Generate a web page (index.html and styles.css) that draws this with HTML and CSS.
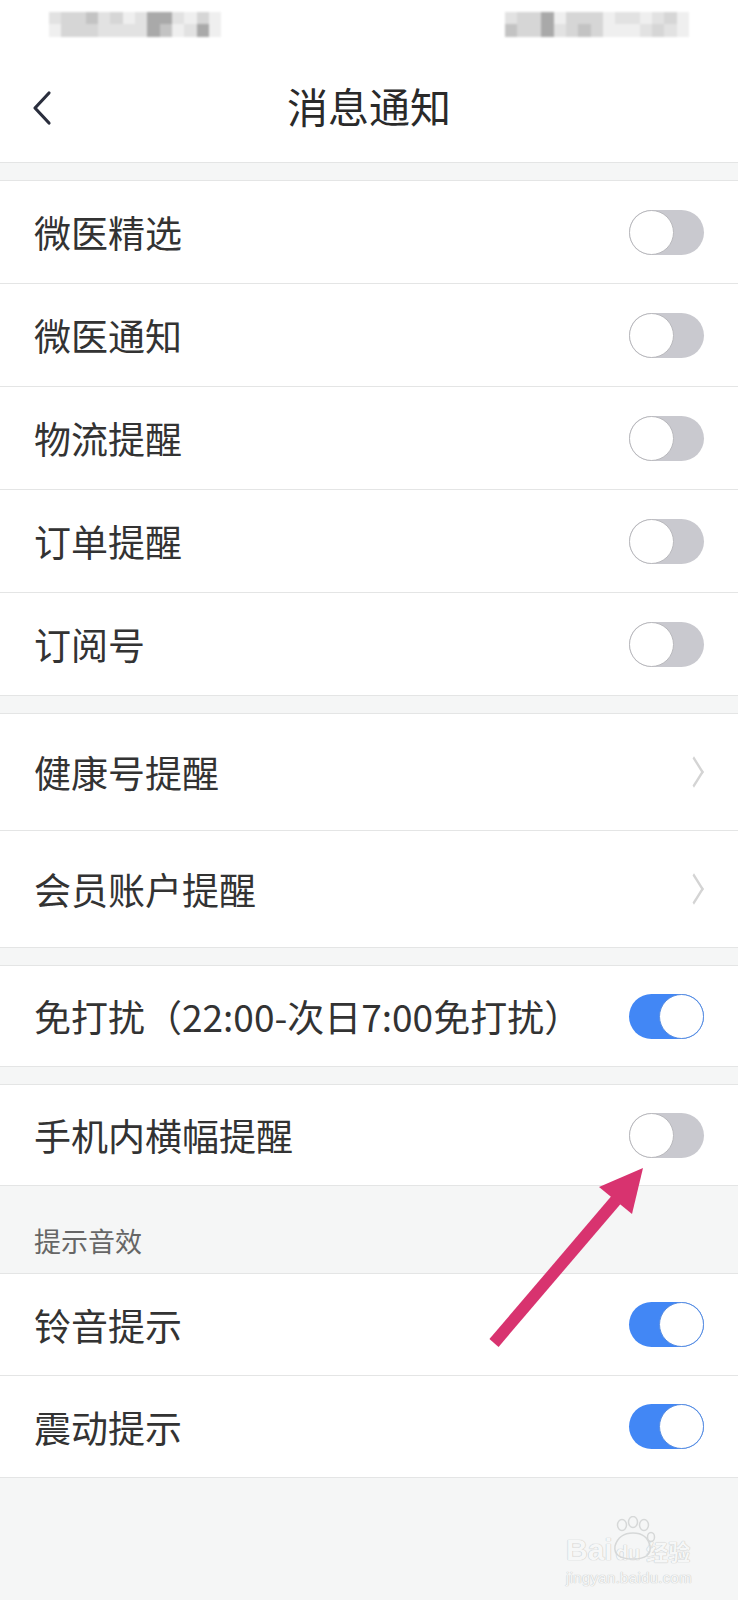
FILE: index.html
```html
<!DOCTYPE html>
<html lang="zh-CN">
<head>
    <meta charset="UTF-8">
    <meta name="viewport" content="width=device-width, initial-scale=1.0">
    <link rel="stylesheet" href="styles.css">
    <title>消息通知</title>
</head>
<body>
    <div class="page">
        <!-- barra de status (borrada) -->
        <div class="status">
            <div class="blur blur-left">
                <i class="s2"></i><i class="s3"></i><i class="s3"></i><i class="s4"></i><i class="s2"></i><i class="s3"></i><i class="s1"></i><i class="s2"></i><i class="s5"></i><i class="s5"></i><i class="s2"></i><i class="s1"></i><i class="s3"></i><i class="s1"></i>
                <i class="s1"></i><i class="s3"></i><i class="s3"></i><i class="s3"></i><i class="s2"></i><i class="s2"></i><i class="s2"></i><i class="s2"></i><i class="s5"></i><i class="s4"></i><i class="s1"></i><i class="s2"></i><i class="s5"></i><i class="s1"></i>
            </div>
            <div class="blur blur-right">
                <i class="s2"></i><i class="s3"></i><i class="s3"></i><i class="s5"></i><i class="s1"></i><i class="s3"></i><i class="s3"></i><i class="s3"></i><i class="s1"></i><i class="s2"></i><i class="s2"></i><i class="s1"></i><i class="s2"></i><i class="s3"></i><i class="s1"></i>
                <i class="s4"></i><i class="s3"></i><i class="s3"></i><i class="s5"></i><i class="s2"></i><i class="s3"></i><i class="s4"></i><i class="s3"></i><i class="s1"></i><i class="s1"></i><i class="s1"></i><i class="s2"></i><i class="s3"></i><i class="s2"></i><i class="s1"></i>
            </div>
        </div>

        <!-- cabecalho -->
        <header class="navbar">
            <svg class="back" width="22" height="36" viewBox="0 0 22 36">
                <path d="M18 3 L4 18 L18 33" fill="none" stroke="#2a2e3d" stroke-width="3.2" stroke-linecap="round" stroke-linejoin="round"/>
            </svg>
            <h1 class="title">消息通知</h1>
        </header>

        <div class="gap"></div>

        <section class="group">
            <div class="row"><span>微医精选</span><span class="switch"></span></div>
            <div class="row"><span>微医通知</span><span class="switch"></span></div>
            <div class="row"><span>物流提醒</span><span class="switch"></span></div>
            <div class="row"><span>订单提醒</span><span class="switch"></span></div>
            <div class="row"><span>订阅号</span><span class="switch"></span></div>
        </section>

        <div class="gap"></div>

        <section class="group">
            <div class="row row-link"><span>健康号提醒</span><span class="chevron"></span></div>
            <div class="row row-link"><span>会员账户提醒</span><span class="chevron"></span></div>
        </section>

        <div class="gap"></div>

        <section class="group group-single">
            <div class="row"><span>免打扰（22:00-次日7:00免打扰）</span><span class="switch on"></span></div>
        </section>

        <div class="gap"></div>

        <section class="group group-single">
            <div class="row"><span>手机内横幅提醒</span><span class="switch"></span></div>
        </section>

        <div class="section-title">提示音效</div>

        <section class="group group-sound">
            <div class="row"><span>铃音提示</span><span class="switch on"></span></div>
            <div class="row"><span>震动提示</span><span class="switch on"></span></div>
        </section>

        <!-- seta de destaque -->
        <svg class="arrow" width="738" height="1600" viewBox="0 0 738 1600">
            <line x1="494" y1="1343" x2="616" y2="1200" stroke="#d8336f" stroke-width="12"/>
            <polygon points="643,1168 599,1187 632,1214" fill="#d8336f"/>
        </svg>

        <!-- marca d'agua -->
        <div class="watermark">
            <svg class="paw" width="46" height="46" viewBox="0 0 46 46">
                <ellipse cx="12" cy="9" rx="4.5" ry="5.5" fill="none" stroke="#d6d8d8" stroke-width="1.5"/>
                <ellipse cx="23" cy="6" rx="4.5" ry="5.5" fill="none" stroke="#d6d8d8" stroke-width="1.5"/>
                <ellipse cx="34" cy="9" rx="4.5" ry="5.5" fill="none" stroke="#d6d8d8" stroke-width="1.5"/>
                <ellipse cx="41" cy="21" rx="3.5" ry="4.5" fill="none" stroke="#d6d8d8" stroke-width="1.5"/>
                <path d="M5 30 Q9 17 23 17 Q37 17 40 30 Q42 43 23 43 Q3 43 5 30 Z" fill="none" stroke="#d6d8d8" stroke-width="1.5"/>
            </svg>
            <div class="wm-main"><span>Bai</span><span class="wm-du">du</span><span class="wm-cn">经验</span></div>
            <div class="wm-url">jingyan.baidu.com</div>
        </div>
    </div>
</body>
</html>
```

FILE: styles.css
```css
:root {
    --texto: #333;
    --fundo: #f5f6f6;
    --linha: #e4e5e5;
    --azul: #4287f5;
    --cinza-switch: #c9c9cf;
}
body {
    margin: 0;
    background-color: var(--fundo);
    font-family: "Noto Sans CJK SC", "Noto Sans", sans-serif;
    color: var(--texto);
}
.page {
    position: relative;
    width: 738px;
    height: 1600px;
    overflow: hidden;
}
/* status */
.status {
    height: 55px;
    background-color: #fff;
    display: flex;
    justify-content: space-between;
    align-items: flex-start;
    padding: 12px 49px 0 49px;
    box-sizing: border-box;
}
.blur {
    display: grid;
    grid-template-rows: 12px 13px;
    filter: blur(0.8px);
}
.blur-left {
    grid-template-columns: repeat(14, 12.3px);
}
.blur-right {
    grid-template-columns: repeat(15, 12.3px);
}
.blur i { display: block; }
.s1 { background: #efefef; }
.s2 { background: #e2e2e2; }
.s3 { background: #d6d6d6; }
.s4 { background: #c3c3c3; }
.s5 { background: #a9a9a9; }
/* cabecalho */
.navbar {
    position: relative;
    height: 108px;
    background-color: #fff;
    display: flex;
    align-items: center;
    justify-content: center;
    border-bottom: 1px solid var(--linha);
    box-sizing: border-box;
    padding-bottom: 6px;
}
.back {
    position: absolute;
    left: 31px;
    top: 35px;
}
.title {
    margin: 0;
    font-size: 41px;
    font-weight: 400;
    color: #2a2a2a;
    line-height: 1;
}
.gap {
    height: 17px;
}
.group {
    background-color: #fff;
    border-top: 1px solid var(--linha);
    border-bottom: 1px solid var(--linha);
}
.row {
    height: 102px;
    display: flex;
    align-items: center;
    justify-content: space-between;
    padding: 0 34px;
    font-size: 37px;
    border-bottom: 1px solid var(--linha);
}
.row:last-child {
    border-bottom: none;
}
.group-single .row {
    height: 100px;
}
.group-sound .row {
    height: 101px;
}
.row-link {
    height: 116px;
}
.switch {
    position: relative;
    width: 75px;
    height: 45px;
    border-radius: 23px;
    background-color: var(--cinza-switch);
    flex-shrink: 0;
}
.switch::after {
    content: "";
    position: absolute;
    left: 0;
    top: 0;
    width: 43px;
    height: 43px;
    border-radius: 50%;
    background: #fff;
    border: 1px solid #b9b9bd;
}
.switch.on {
    background-color: var(--azul);
}
.switch.on::after {
    left: auto;
    right: 0;
    border-color: #5a8ee0;
}
.chevron {
    width: 12px;
    height: 12px;
    border-top: 2px solid #d4d4d4;
    border-right: 2px solid #d4d4d4;
    transform: scaleY(1.6) rotate(45deg);
    margin-right: 3px;
}
.section-title {
    height: 87px;
    box-sizing: border-box;
    padding: 41px 34px 0;
    font-size: 27px;
    line-height: 1;
    color: #666;
}
/* seta */
.arrow {
    position: absolute;
    left: 0;
    top: 0;
    pointer-events: none;
}
/* marca d'agua */
.watermark {
    position: absolute;
    left: 566px;
    top: 1516px;
    width: 140px;
    color: #f6f7f7;
    text-shadow: 0 0 1px #c4c6c6, 0 0 1px #c4c6c6;
}
.paw {
    position: absolute;
    left: 44px;
    top: 0;
}
.wm-main {
    margin-top: 18px;
    font-family: "Liberation Sans", sans-serif;
    font-size: 30px;
    font-weight: 700;
    line-height: 32px;
    white-space: nowrap;
}
.wm-du {
    font-size: 20px;
    margin-left: 3px;
}
.wm-cn {
    font-family: "Noto Sans CJK SC", sans-serif;
    font-size: 22px;
    margin-left: 6px;
}
.wm-url {
    font-family: "Liberation Sans", sans-serif;
    font-size: 15px;
    line-height: 18px;
    letter-spacing: 0.3px;
}
```
